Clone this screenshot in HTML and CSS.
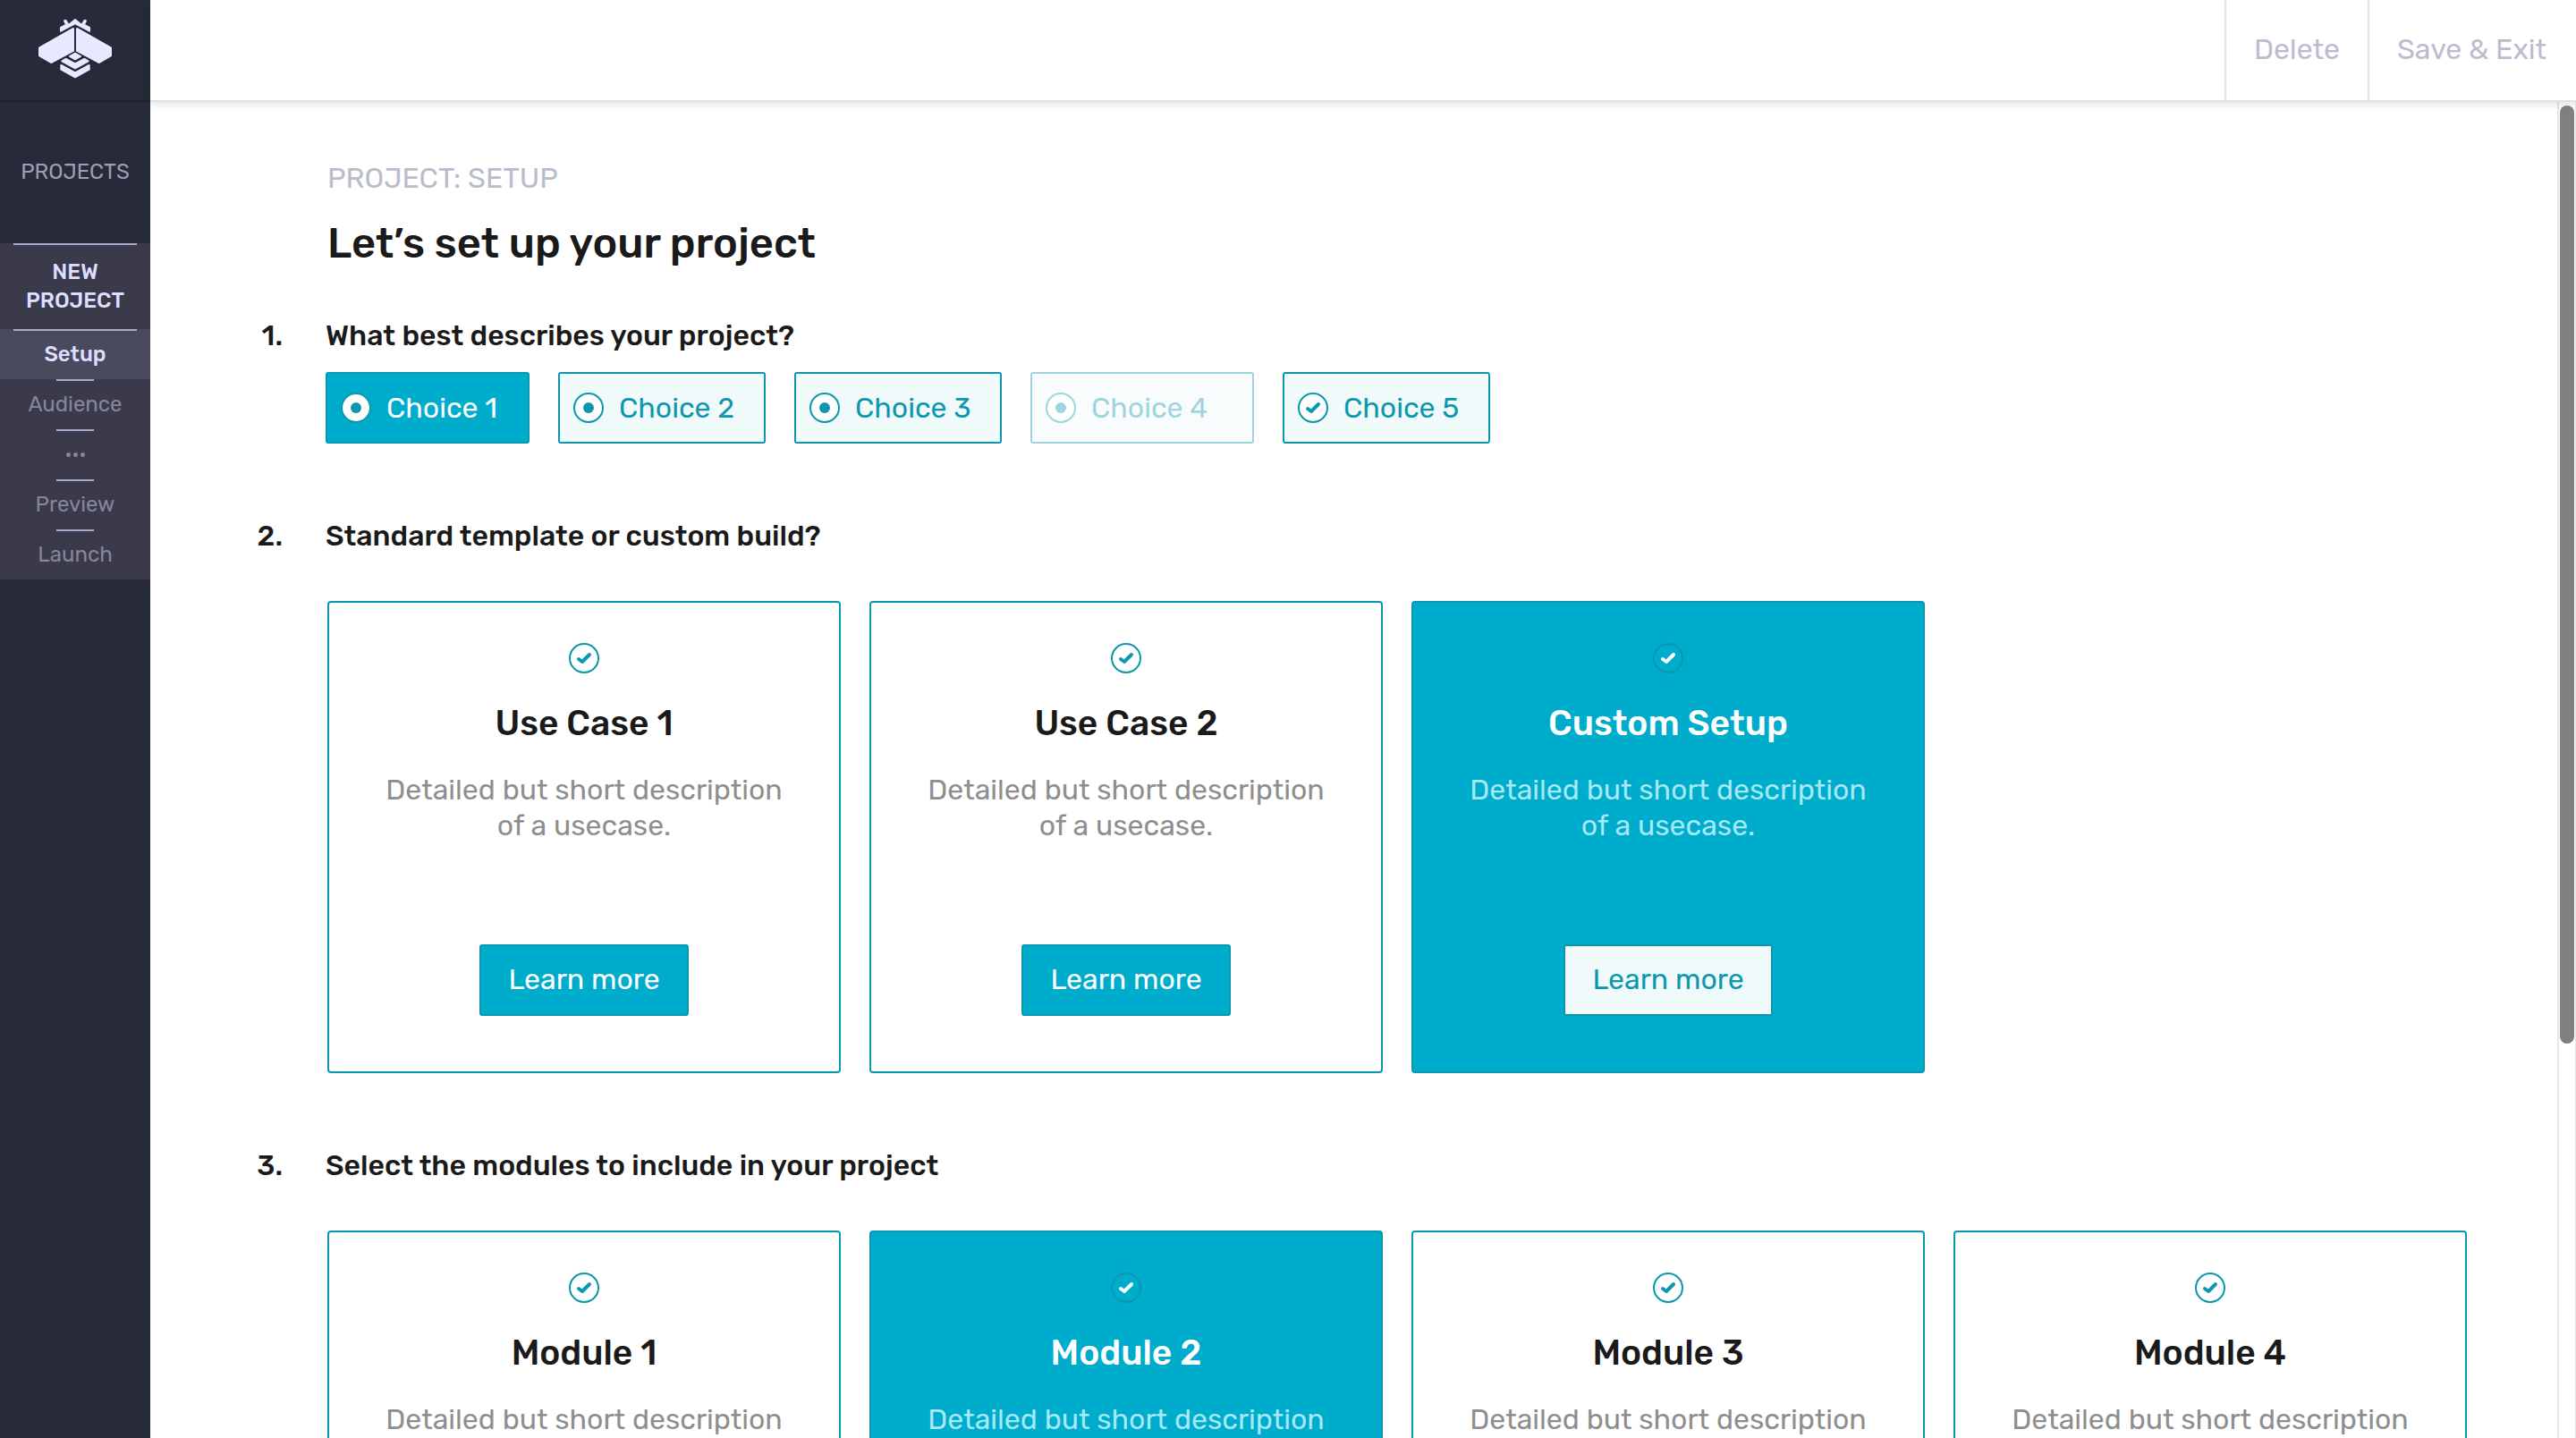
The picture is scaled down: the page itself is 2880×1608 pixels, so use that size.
FILE: index.html
```html
<!DOCTYPE html>
<html lang="en">
<head>
<meta charset="utf-8">
<title>Project setup</title>
<link rel="stylesheet" href="styles.css">
</head>
<body>
<svg class="sprite" aria-hidden="true">
  <symbol id="tick" viewBox="0 0 34 34"><path d="M11 18l4 3 8-8" fill="none" stroke="currentColor" stroke-width="4" stroke-linecap="round" stroke-linejoin="round"/></symbol>
</svg>
<div class="app">
  <nav class="sidebar">
    <a class="logo" href="#" aria-label="Home">
      <svg viewBox="126 60 252 204" width="84" height="68" fill="#e6e9ff" stroke="#e6e9ff" stroke-linejoin="round" stroke-linecap="round">
        <path d="M219 71l6 10M285 71l-6 10" fill="none" stroke-width="11"/>
        <path d="M204 104V93l20-11 9 0 19-16 19 16 9 0 20 11v11l-48-26z" stroke-width="6"/>
        <path d="M245 97v73l-73 39-39-23v-25z" stroke-width="8"/>
        <path d="M259 97v73l73 39 39-23v-25z" stroke-width="8"/>
        <path d="M252 179l18 10-18 10-18-10z" stroke-width="6"/>
        <path d="M208 205l13-7 31 16 31-16 13 7-44 24z" stroke-width="6"/>
        <path d="M205 219l47 25 47-25v14l-47 26-47-26z" stroke-width="6"/>
      </svg>
    </a>
    <a class="projects" href="#">PROJECTS</a>
    <div class="steps">
      <a class="step step-head" href="#">NEW PROJECT</a>
      <a class="step step-current" href="#">Setup</a>
      <a class="step" href="#">Audience</a>
      <a class="step" href="#" aria-label="More steps"><span class="dots"><i></i><i></i><i></i></span></a>
      <a class="step" href="#">Preview</a>
      <a class="step" href="#">Launch</a>
    </div>
  </nav>
  <div class="page">
    <header class="topbar">
      <button class="action">Delete</button>
      <button class="action">Save &amp; Exit</button>
    </header>
    <div class="viewport">
      <main class="content">
        <p class="crumb">PROJECT: SETUP</p>
        <h1>Let’s set up your project</h1>

        <section class="question">
          <h2><span class="num">1.</span>What best describes your project?</h2>
          <div class="choices">
            <label class="choice choice-on"><span class="mark"><input type="radio" name="kind" checked></span>Choice 1</label>
            <label class="choice"><span class="mark"><input type="radio" name="kind"></span>Choice 2</label>
            <label class="choice"><span class="mark"><input type="radio" name="kind"></span>Choice 3</label>
            <label class="choice choice-off"><span class="mark"><input type="radio" name="kind" disabled></span>Choice 4</label>
            <label class="choice"><span class="mark"><input type="checkbox" name="extra"><svg><use href="#tick"/></svg></span>Choice 5</label>
          </div>
        </section>

        <section class="question">
          <h2><span class="num">2.</span>Standard template or custom build?</h2>
          <div class="cards">
            <article class="card">
              <label><span class="mark"><input type="checkbox"><svg><use href="#tick"/></svg></span><span class="name">Use Case 1</span></label>
              <p>Detailed but short description of a usecase.</p>
              <button class="more">Learn more</button>
            </article>
            <article class="card">
              <label><span class="mark"><input type="checkbox"><svg><use href="#tick"/></svg></span><span class="name">Use Case 2</span></label>
              <p>Detailed but short description of a usecase.</p>
              <button class="more">Learn more</button>
            </article>
            <article class="card card-on">
              <label><span class="mark"><input type="checkbox" checked><svg><use href="#tick"/></svg></span><span class="name">Custom Setup</span></label>
              <p>Detailed but short description of a usecase.</p>
              <button class="more">Learn more</button>
            </article>
          </div>
        </section>

        <section class="question">
          <h2><span class="num">3.</span>Select the modules to include in your project</h2>
          <div class="cards">
            <article class="card">
              <label><span class="mark"><input type="checkbox"><svg><use href="#tick"/></svg></span><span class="name">Module 1</span></label>
              <p>Detailed but short description</p>
            </article>
            <article class="card card-on">
              <label><span class="mark"><input type="checkbox" checked><svg><use href="#tick"/></svg></span><span class="name">Module 2</span></label>
              <p>Detailed but short description</p>
            </article>
            <article class="card">
              <label><span class="mark"><input type="checkbox"><svg><use href="#tick"/></svg></span><span class="name">Module 3</span></label>
              <p>Detailed but short description</p>
            </article>
            <article class="card">
              <label><span class="mark"><input type="checkbox"><svg><use href="#tick"/></svg></span><span class="name">Module 4</span></label>
              <p>Detailed but short description</p>
            </article>
          </div>
        </section>
      </main>
      <div class="scrollbar"><div class="thumb"></div></div>
    </div>
  </div>
</div>
</body>
</html>
```
FILE: styles.css
```css
:root {
  --teal: #00accc;
  --teal-dark: #0b98ae;
  --tint: #f1fafb;
  --ink: #1a1a1a;
}
* { box-sizing: border-box; }
body {
  margin: 0;
  background: #fff;
  color: var(--ink);
  font-family: Rubik, Roboto, sans-serif;
  font-size: 32px;
  line-height: 40px;
}
h1, h2, p { margin: 0; font-weight: 500; }
a { color: inherit; text-decoration: none; }
button { font: inherit; cursor: pointer; }
.sprite { display: none; }
.app { display: flex; height: 100vh; }

/* Sidebar */
.sidebar {
  flex: 0 0 168px;
  background: #272a38;
  color: #9d9eb5;
  font-size: 24px;
  line-height: 32px;
  text-align: center;
}
.logo {
  display: flex;
  justify-content: center;
  height: 114px;
  padding-top: 20px;
  border-bottom: 2px solid #20212b;
}
.projects { display: block; padding: 62px 0 64px; }
.steps {
  background: #3a3a4b;
  color: #85869d;
  border-bottom: 2px solid #2a2a36;
}
.step {
  display: flex;
  flex-direction: column;
  align-items: center;
  height: 56px;
}
.step::before {
  content: "";
  flex: none;
  width: 42px;
  height: 2px;
  margin-bottom: 10px;
  background: #a9a9cc;
}
.step-head, .step-current { color: #dcdfff; font-weight: 500; }
.step-head::before, .step-current::before { width: 138px; }
.step-head { height: 96px; padding: 0 15px; }
.step-head::before { margin-bottom: 14px; }
.step-current { background: #4a4a5e; }
.dots { display: flex; gap: 3px; padding-top: 14px; }
.dots i { width: 5px; height: 5px; border-radius: 50%; background: currentColor; }

/* Page */
.page { flex: 1; min-width: 0; display: flex; flex-direction: column; }
.topbar {
  position: relative;
  z-index: 1;
  flex: 0 0 112px;
  display: flex;
  justify-content: flex-end;
  padding-right: 2px;
  background: #fff;
  box-shadow: 0 2px 0 #e0e0e0, 0 4px 10px rgba(0, 0, 0, .14);
}
.action {
  padding: 0 31px 2px;
  border: 0;
  border-left: 2px solid #e3e3e6;
  background: none;
  color: #bcbcd0;
}
.viewport { position: relative; flex: 1; min-height: 0; }
.content { height: 100%; overflow: hidden; padding: 67px 122px 64px 198px; }
.scrollbar {
  position: absolute;
  top: 0;
  right: 0;
  bottom: 0;
  width: 21px;
  padding: 6px 1px 0 1px;
  border-left: 2px solid #e6e6e8;
  border-right: 1px solid #e6e6e8;
}
.thumb { height: 70.4%; border-radius: 9px; background: #808080; }

.crumb { color: #b9bcca; font-weight: 400; }
h1 { padding-top: 23px; font-size: 47px; line-height: 60px; }
.question { padding-top: 52px; }
.question + .question { padding-top: 82px; }
h2 { display: flex; margin-left: -98px; font-size: 32px; line-height: 42px; }
.num { width: 48px; margin-right: 48px; text-align: right; }

.mark { display: grid; width: 34px; height: 34px; }
.mark > * { grid-area: 1 / 1; width: 34px; height: 34px; margin: 0; }
.mark svg { pointer-events: none; color: var(--teal-dark); }
.mark input {
  appearance: none;
  display: grid;
  place-items: center;
  border: 2px solid var(--teal-dark);
  border-radius: 50%;
  background: #fff;
}
.mark input[type="radio"]::before {
  content: "";
  width: 12px;
  height: 12px;
  border-radius: 50%;
  background: var(--teal-dark);
}

.choices { display: flex; gap: 32px; margin: 20px 0 0 -2px; }
.choice {
  display: flex;
  align-items: center;
  gap: 17px;
  min-width: 232px;
  height: 80px;
  padding: 0 15px;
  border: 2px solid var(--teal-dark);
  border-radius: 3px;
  background: var(--tint);
  color: var(--teal-dark);
}
.choice-on { min-width: 228px; background: var(--teal); color: #fff; }
.choice-off { min-width: 250px; opacity: .4; }

.cards { display: grid; grid-template-columns: repeat(4, 1fr); gap: 32px; margin-top: 52px; }
.card {
  display: flex;
  flex-direction: column;
  align-items: center;
  height: 528px;
  padding: 45px 60px 62px;
  border: 2px solid var(--teal-dark);
  border-radius: 4px;
  text-align: center;
}
.card label { display: flex; flex-direction: column; align-items: center; gap: 32px; }
.name { font-size: 39px; font-weight: 500; line-height: 48px; }
.card p { margin-top: 30px; color: #8e8e8e; font-weight: 400; }
.more {
  height: 80px;
  width: 234px;
  margin-top: auto;
  padding: 0 0 2px;
  border: 2px solid var(--teal-dark);
  border-radius: 3px;
  background: var(--teal);
  color: #fff;
}
.card-on { background: var(--teal); color: #fff; }
.card-on p { color: #a5e9f6; }
.card-on .mark input { background: none; }
.card-on .mark svg { color: #fff; }
.card-on .more { background: var(--tint); color: var(--teal-dark); }
```
